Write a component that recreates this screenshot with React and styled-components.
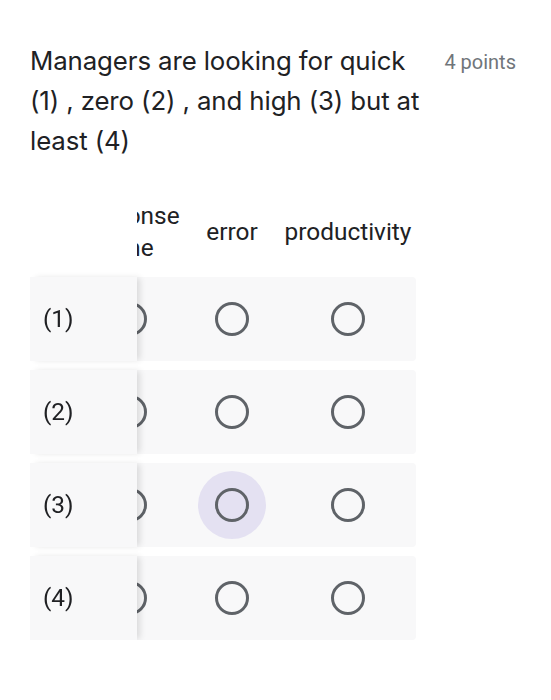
import React, { useLayoutEffect, useRef } from 'react';
import styled, { createGlobalStyle } from 'styled-components';

const columns = [
  { label: 'response time', width: 101 },
  { label: 'error', width: 104 },
  { label: 'productivity', width: 128 },
];

const rows = ['(1)', '(2)', '(3)', '(4)'];

// the radio the finger is resting on in the shot
const focused = { row: 2, col: 1 };

export default function App() {
  const gridRef = useRef(null);

  // grid is scrolled all the way right, first column stays pinned
  useLayoutEffect(() => {
    const el = gridRef.current;
    if (el) el.scrollLeft = el.scrollWidth;
  }, []);

  return (
    <>
      <GlobalStyle />
      <Card>
        <QuestionHeader>
          <Title>Managers are looking for quick (1) , zero (2) , and high (3) but at least (4)</Title>
          <Points>4 points</Points>
        </QuestionHeader>

        <Grid ref={gridRef}>
          <Track>
            <HeaderRow>
              <LabelCell $header />
              {columns.map(c => (
                <OptionCell key={c.label} $width={c.width}>
                  <ColumnLabel>{c.label}</ColumnLabel>
                </OptionCell>
              ))}
            </HeaderRow>

            {rows.map((r, ri) => (
              <Row key={r}>
                <LabelCell>
                  <RowLabel>{r}</RowLabel>
                </LabelCell>
                {columns.map((c, ci) => (
                  <OptionCell key={c.label} $width={c.width}>
                    <RadioHit $focused={focused.row === ri && focused.col === ci}>
                      <Ring />
                    </RadioHit>
                  </OptionCell>
                ))}
                <Tail />
              </Row>
            ))}
          </Track>
        </Grid>
      </Card>
    </>
  );
}

const GlobalStyle = createGlobalStyle`
  body {
    margin: 0;
    background: #fff;
    font-family: Roboto, 'Liberation Sans', sans-serif;
    color: #202124;
  }
`;

const Card = styled.div`
  padding: 41px 35px 0 30px;
`;

const QuestionHeader = styled.div`
  display: flex;
  align-items: flex-start;
  gap: 14px;
`;

const Title = styled.div`
  flex: 1;
  font-family: Inter, Roboto, sans-serif;
  font-size: 25.8px;
  line-height: 40px;
  letter-spacing: -0.1px;
  color: #202124;
`;

const Points = styled.div`
  flex: none;
  font-family: Roboto, sans-serif;
  font-size: 20px;
  line-height: 42px;
  color: #70757a;
`;

const Grid = styled.div`
  margin-top: 35px;
  width: 386px;
  overflow-x: auto;
  scrollbar-width: none;
  &::-webkit-scrollbar {
    display: none;
  }
`;

const Track = styled.div`
  display: flex;
  flex-direction: column;
  gap: 9px;
  width: max-content;
`;

const HeaderRow = styled.div`
  display: flex;
  height: 72px;
`;

const Row = styled.div`
  display: flex;
  height: 84px;
  background: #f8f8f9;
  border-radius: 4px;
`;

const LabelCell = styled.div`
  position: sticky;
  left: 0;
  z-index: 1;
  flex: none;
  width: 107px;
  box-sizing: border-box;
  padding-left: 13px;
  display: flex;
  align-items: center;
  background: ${p => (p.$header ? '#fff' : '#f8f8f9')};
  border-radius: 4px 0 0 4px;
  box-shadow: ${p => (p.$header ? 'none' : '4px 0 6px -1px rgba(0, 0, 0, 0.12)')};
`;

const OptionCell = styled.div`
  flex: none;
  width: ${p => p.$width}px;
  display: flex;
  align-items: center;
  justify-content: center;
  text-align: center;
`;

const Tail = styled.div`
  flex: none;
  width: 4px;
`;

const ColumnLabel = styled.span`
  font-size: 24.4px;
  line-height: 32px;
  color: #202124;
`;

const RowLabel = styled.span`
  font-size: 24.4px;
  line-height: 32px;
  color: #202124;
`;

const RadioHit = styled.div`
  width: 68px;
  height: 68px;
  border-radius: 50%;
  display: flex;
  align-items: center;
  justify-content: center;
  background: ${p => (p.$focused ? '#e4e1f2' : 'transparent')};
`;

const Ring = styled.div`
  width: 34px;
  height: 34px;
  box-sizing: border-box;
  border: 3px solid #5f6368;
  border-radius: 50%;
`;
